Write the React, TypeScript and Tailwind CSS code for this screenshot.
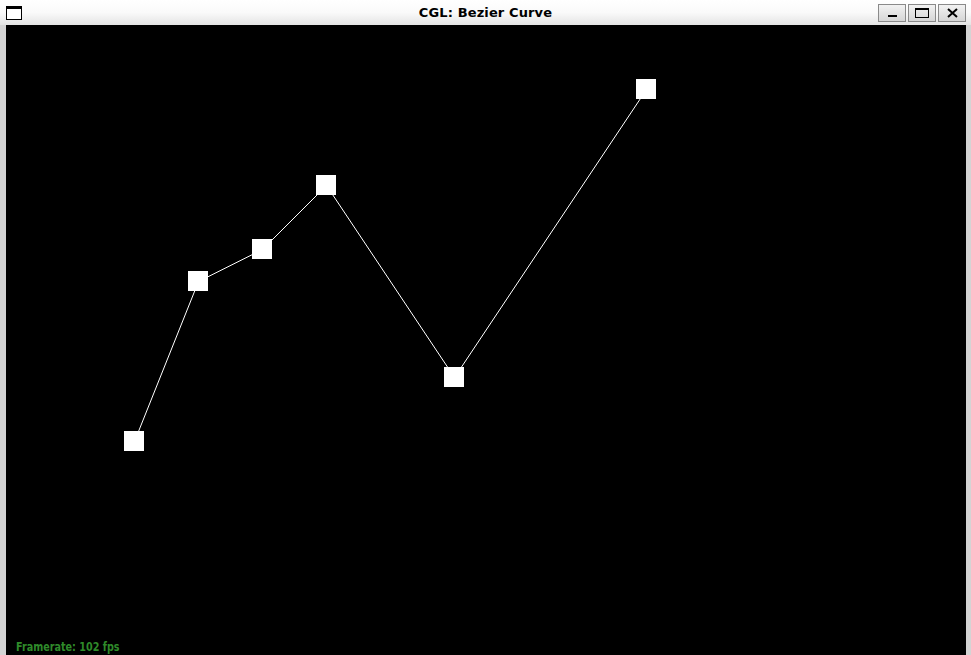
const points: [number, number][] = [
  [128, 416],
  [192, 256],
  [256, 224],
  [320, 160],
  [448, 352],
  [640, 64],
];

function TitleBar() {
  return (
    <div className="h-[25px] grid grid-cols-[1fr_auto_1fr] items-center bg-gradient-to-b from-white via-[#fafafa] to-[#e4e4e4]">
      <div className="ml-[6px] w-[16px] h-[14px] border border-black border-t-[3px] bg-white" />
      <div
        className="text-center text-[13px] font-bold text-black tracking-[0.12px]"
        style={{ fontFamily: '"DejaVu Sans", sans-serif' }}
      >
        CGL: Bezier Curve
      </div>
      <div className="flex justify-end gap-[2px] mr-[5px] mt-[1px]">
        <button className="w-[28px] h-[18px] border border-[#8a8a8a] bg-gradient-to-b from-[#f2f2f2] to-[#d6d6d6] flex items-end justify-center pb-[4px]">
          <span className="block w-[9px] h-[2px] bg-black" />
        </button>
        <button className="w-[28px] h-[18px] border border-[#8a8a8a] bg-gradient-to-b from-[#f2f2f2] to-[#d6d6d6] flex items-center justify-center">
          <span className="block w-[14px] h-[10px] border border-black border-t-2" />
        </button>
        <button className="w-[28px] h-[18px] border border-[#8a8a8a] bg-gradient-to-b from-[#f2f2f2] to-[#d6d6d6] flex items-center justify-center">
          <svg width="11" height="10" viewBox="0 0 11 10">
            <path d="M1 1 L10 9 M10 1 L1 9" stroke="black" strokeWidth="2" />
          </svg>
        </button>
      </div>
    </div>
  );
}

function Canvas() {
  return (
    <div className="relative w-[960px] h-[630px] bg-black overflow-hidden">
      <svg className="absolute inset-0" width="960" height="640" viewBox="0 0 960 640">
        <polyline
          points={points.map(([x, y]) => `${x + 0.5},${y + 0.5}`).join(" ")}
          fill="none"
          stroke="white"
          strokeWidth="1"
        />
        {points.map(([x, y], i) => (
          <rect key={i} x={x - 10} y={y - 10} width="20" height="20" fill="white" />
        ))}
      </svg>
      {/* fps counter, drawn condensed */}
      <div
        className="absolute left-[10px] bottom-[-1px] text-[13px] font-bold text-[#2f8a2a] origin-left scale-x-[0.74]"
        style={{ fontFamily: '"DejaVu Sans", sans-serif' }}
      >
        Framerate: 102 fps
      </div>
    </div>
  );
}

export default function App() {
  return (
    <div className="w-[971px] h-[655px] overflow-hidden bg-[#d4d4d4] flex flex-col">
      <TitleBar />
      <div className="pl-[6px]">
        <Canvas />
      </div>
    </div>
  );
}
